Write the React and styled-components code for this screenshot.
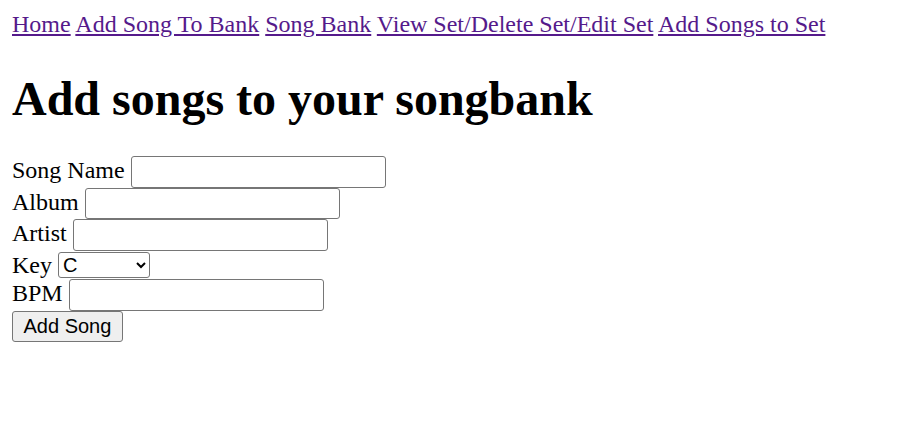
import React from "react";
import styled, { createGlobalStyle } from "styled-components";

const GlobalStyle = createGlobalStyle`
  body {
    margin: 12px;
    background: #ffffff;
    color: #000000;
    font-family: "Liberation Serif", "Times New Roman", serif;
    font-size: 24px;
  }
`;

const Nav = styled.nav`
  display: block;
  line-height: 24px;
`;

const NavLink = styled.a`
  color: #551a8b;
  text-decoration: underline;
  cursor: pointer;
`;

const Title = styled.h1`
  font-size: 48px;
  font-weight: bold;
  margin: 35px 0 30px;
`;

const Row = styled.div`
  display: block;
`;

const TextInput = styled.input`
  box-sizing: border-box;
  width: 255px;
  height: 31.5px;
  padding: 1.5px 3px;
  border: 1.5px solid #767676;
  border-radius: 3px;
  font-family: "Liberation Sans", Arial, sans-serif;
  font-size: 20px;
  background: #ffffff;
  vertical-align: baseline;
`;

const KeySelect = styled.select`
  box-sizing: border-box;
  width: 92px;
  height: 26px;
  margin: 1.5px 0 1px;
  border: 1.5px solid #767676;
  border-radius: 3px;
  font-family: "Liberation Sans", Arial, sans-serif;
  font-size: 20px;
  background: #ffffff;
  color: #000000;
`;

const SubmitButton = styled.button`
  box-sizing: border-box;
  height: 31.5px;
  padding: 1.5px 10.5px;
  border: 1.5px solid #767676;
  border-radius: 3px;
  background: #efefef;
  color: #000000;
  font-family: "Liberation Sans", Arial, sans-serif;
  font-size: 20px;
`;

const links = [
  "Home",
  "Add Song To Bank",
  "Song Bank",
  "View Set/Delete Set/Edit Set",
  "Add Songs to Set",
];

const keys = ["C", "C#", "D", "D#", "E", "F", "F#", "G", "G#", "A", "A#", "B"];

export default function App() {
  return (
    <>
      <GlobalStyle />
      <Nav>
        {links.map((l, i) => (
          <React.Fragment key={l}>
            {i > 0 && " "}
            <NavLink>{l}</NavLink>
          </React.Fragment>
        ))}
      </Nav>
      <Title>Add songs to your songbank</Title>
      <form onSubmit={(e) => e.preventDefault()}>
        <Row>
          Song Name <TextInput type="text" />
        </Row>
        <Row>
          Album <TextInput type="text" />
        </Row>
        <Row>
          Artist <TextInput type="text" />
        </Row>
        <Row>
          Key{" "}
          <KeySelect defaultValue="C">
            {keys.map((k) => (
              <option key={k}>{k}</option>
            ))}
          </KeySelect>
        </Row>
        <Row>
          BPM <TextInput type="text" />
        </Row>
        <SubmitButton type="submit">Add Song</SubmitButton>
      </form>
    </>
  );
}
